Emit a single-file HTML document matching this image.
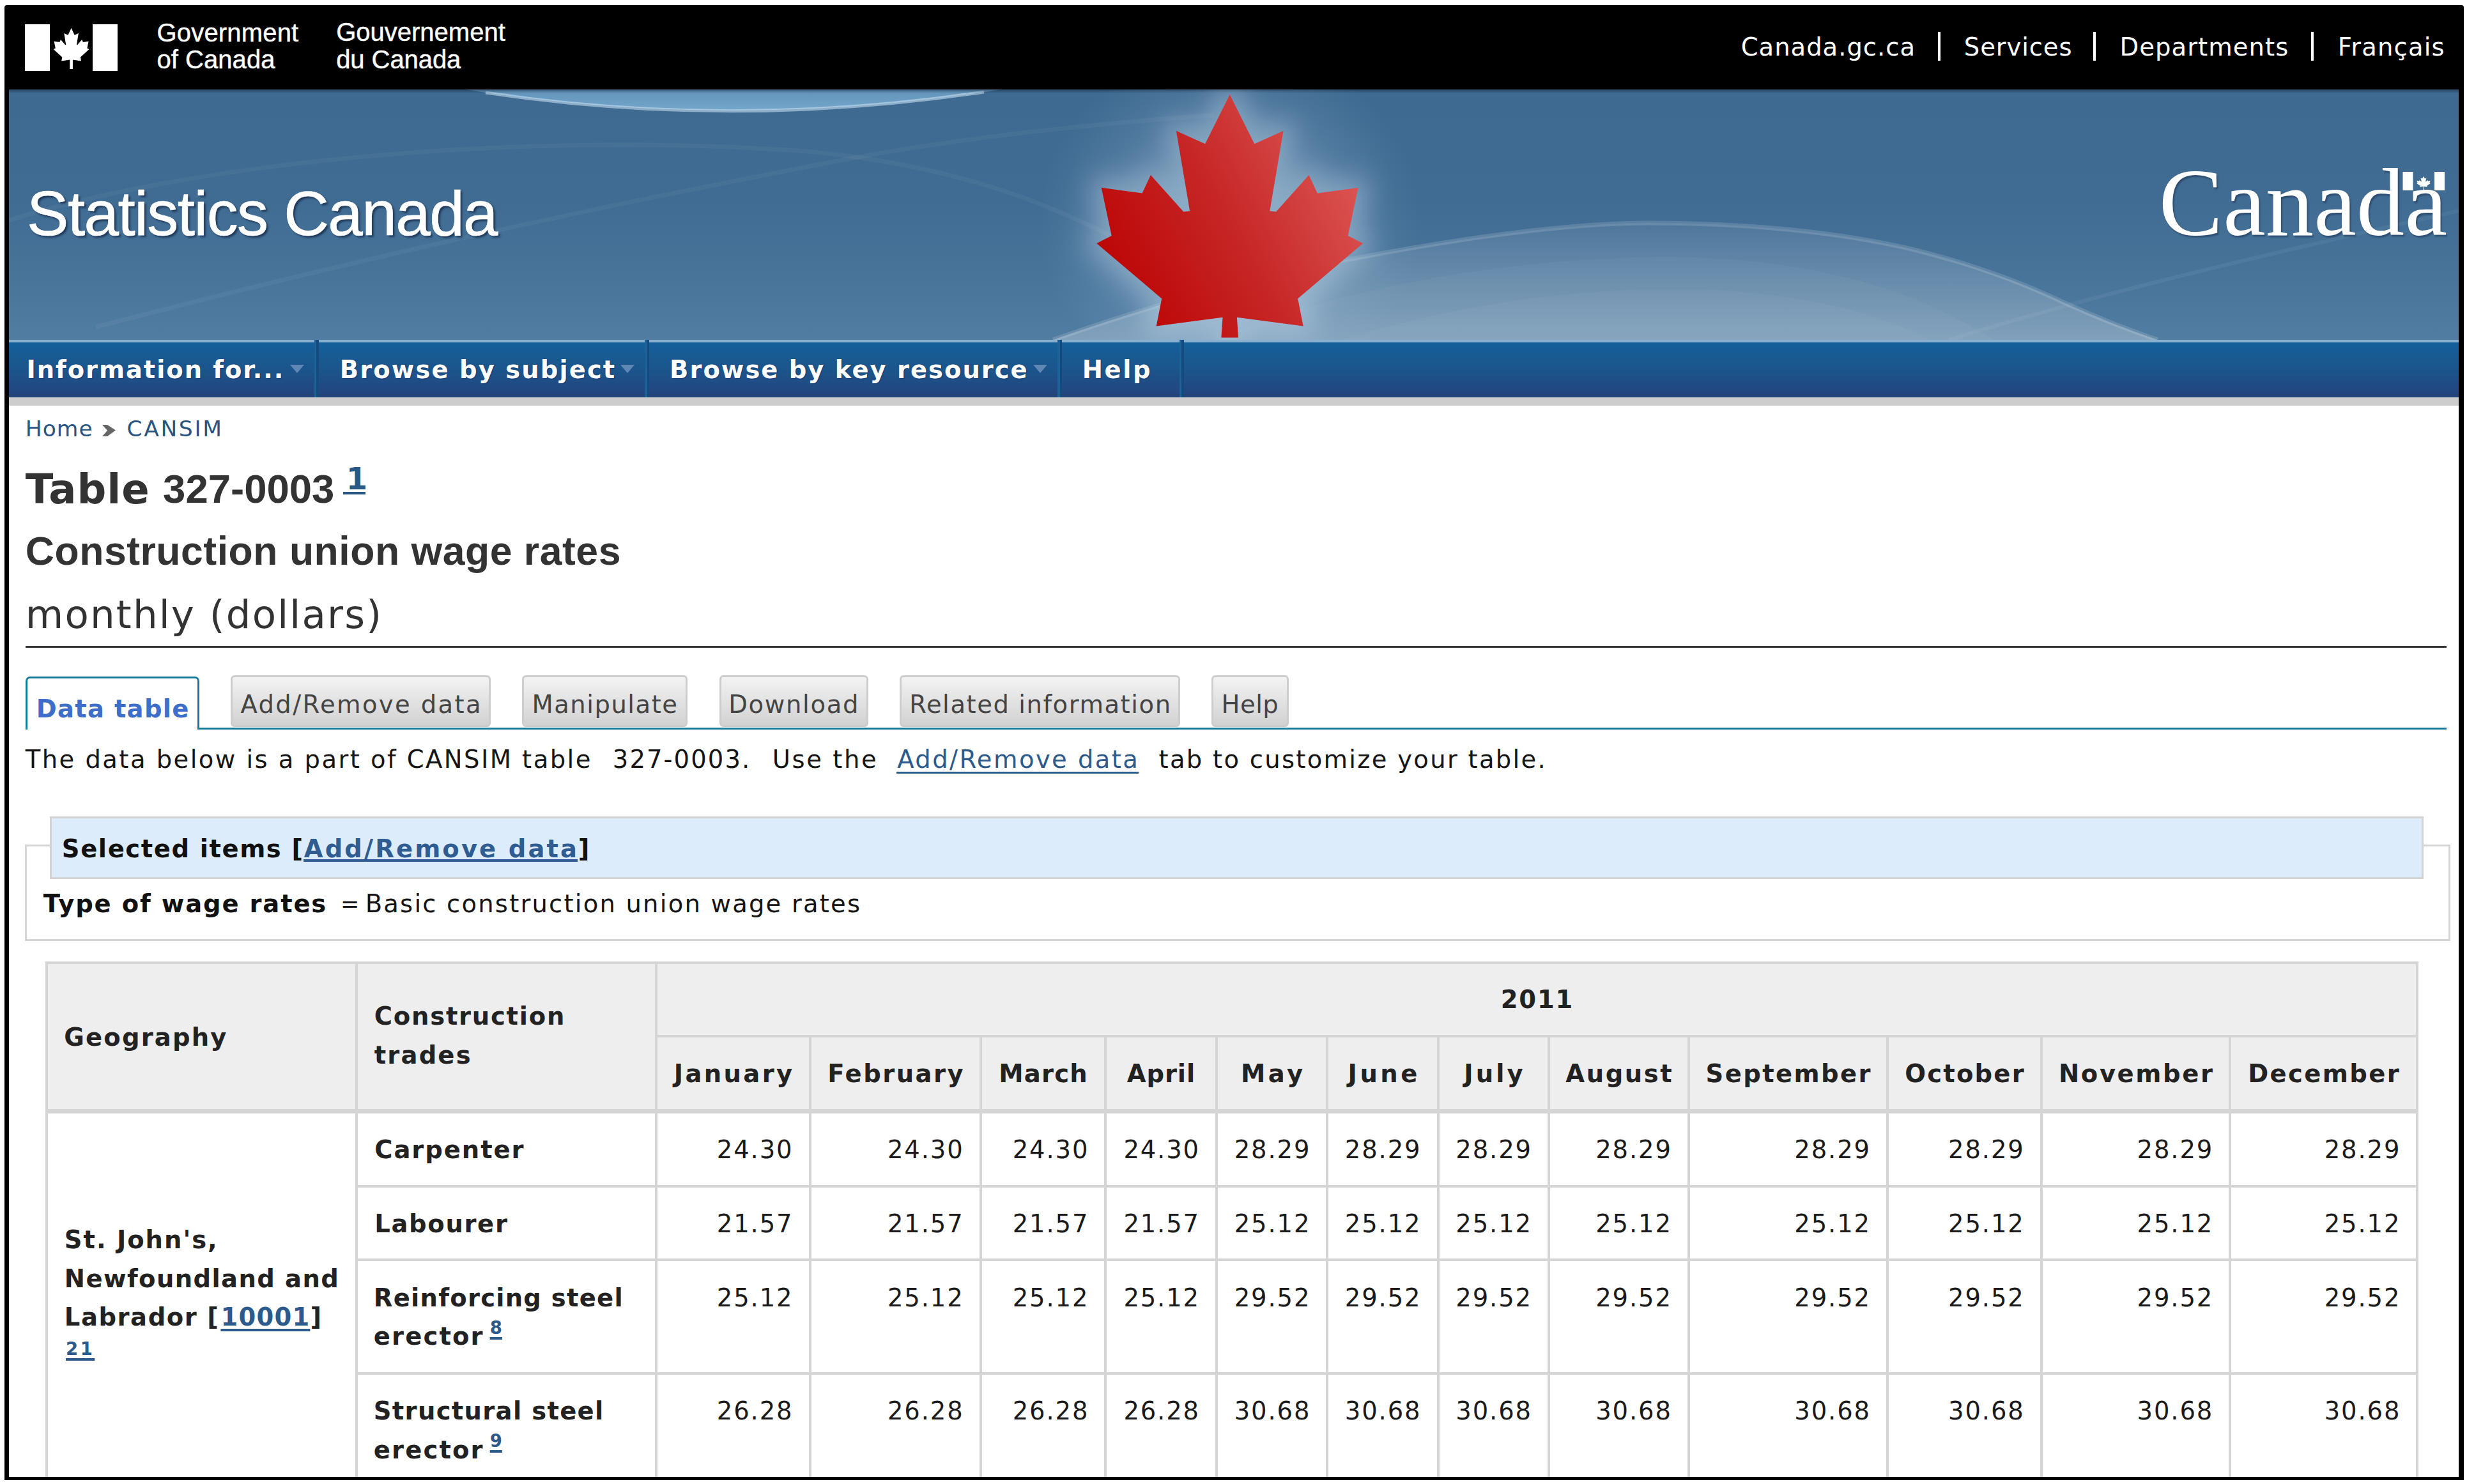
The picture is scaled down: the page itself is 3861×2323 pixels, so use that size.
<!DOCTYPE html>
<html lang="en"><head><meta charset="utf-8"><title>CANSIM - 327-0003 - Construction union wage rates</title>
<style>
html,body{margin:0;padding:0;background:#fff;}
body{width:3861px;height:2323px;position:relative;font-family:"DejaVu Sans","Liberation Sans",sans-serif;}
#wrap{position:absolute;left:0;top:0;width:3861px;height:2323px;overflow:hidden;}
#wrap div,#wrap span,#wrap a,#wrap svg,#wrap h1,#wrap p,#wrap nav,#wrap header,#wrap section,#wrap table,#wrap sup{position:absolute;margin:0;padding:0;white-space:nowrap;box-sizing:border-box;}
a{text-decoration:none;color:inherit;}

#wrap .g{position:static;display:contents;}
#frame{left:7px;top:8px;width:3849px;height:2309px;background:#000;border-radius:4px 4px 0 0;}
#page{left:14px;top:140px;width:3834px;height:2172px;background:#fff;}
.sep{background:#fff;width:4px;}
.navdiv{top:532px;width:7px;height:90px;background:linear-gradient(90deg,#1a6298 0,#1a6298 50%,#164a7e 50%,#164a7e 100%);}
.arr{width:0;height:0;border-left:11px solid transparent;border-right:11px solid transparent;border-top:13px solid #5f87b5;top:571px;}

.lnk{text-decoration:underline;text-decoration-thickness:3px;text-underline-offset:5px;}
.btn{top:1057px;height:81px;border:3px solid #cdcdcd;border-radius:6px;background:linear-gradient(#f3f3f3,#e4e4e4 45%,#d2d2d2);}

#wrap table#dt{left:71px;top:1505px;width:3714px;border-collapse:separate;border-spacing:0;table-layout:fixed;font-size:38.5px;line-height:60px;color:#222;}
#wrap table#dt *{position:static;}
#dt th,#dt td{border-left:4px solid #d5d5d5;border-top:4px solid #d5d5d5;padding:0;vertical-align:top;text-align:left;font-weight:bold;overflow:hidden;box-sizing:border-box;}
#dt td{font-weight:normal;text-align:right;color:#1a1a1a;}
#dt .last{border-right:4px solid #d5d5d5;}
#dt thead th{background:#eee;}
#dt thead th.c{text-align:center;}
#dt tbody tr.first>*{border-top-width:7px;}
#wrap #dt span.b{display:block;}
#wrap #dt a{color:#2b5b8c;text-decoration:underline;text-decoration-thickness:3.5px;text-underline-offset:5px;}
#wrap #dt sup{font-size:27.5px;line-height:0;vertical-align:17.5px;}

</style></head><body><div id="wrap">
<div id="frame"></div>
<div id="page"></div>
<header class="g" id="gcnb">
<svg style="left:14px;top:8px" width="3834" height="132" viewBox="14 8 3834 132">
<rect x="39" y="38" width="39" height="73" fill="#fff"/><rect x="145" y="38" width="39" height="73" fill="#fff"/>
<polygon fill="#fff" points="111.6,44.0 116.8,55.0 122.9,52.1 120.0,69.9 121.3,70.1 128.2,61.9 130.0,65.9 138.6,64.7 136.4,75.4 139.6,77.1 125.9,89.4 127.0,95.5 113.9,93.6 113.9,108.0 109.3,108.0 109.3,93.6 96.2,95.5 97.3,89.4 83.6,77.1 86.8,75.4 84.6,64.7 93.2,65.9 95.0,61.9 101.9,70.1 103.2,69.9 100.3,52.1 106.4,55.0"/>
</svg>
<span style="left:245.5px;top:30.5px;font:40px/40px 'Liberation Sans',sans-serif;color:#fff;letter-spacing:0.18px;-webkit-text-stroke:.45px #fff;">Government</span>
<span style="left:245.5px;top:73.3px;font:40px/40px 'Liberation Sans',sans-serif;color:#fff;letter-spacing:0.04px;-webkit-text-stroke:.45px #fff;">of Canada</span>
<span style="left:526.2px;top:29.8px;font:40px/40px 'Liberation Sans',sans-serif;color:#fff;letter-spacing:0.00px;-webkit-text-stroke:.45px #fff;">Gouvernement</span>
<span style="left:526.2px;top:72.6px;font:40px/40px 'Liberation Sans',sans-serif;color:#fff;letter-spacing:-0.07px;-webkit-text-stroke:.45px #fff;">du Canada</span>
<a style="left:2724.7px;top:55.3px;font:38.5px/38.5px 'DejaVu Sans','Liberation Sans',sans-serif;color:#fff;letter-spacing:1.00px;">Canada.gc.ca</a>
<a style="left:3073.8px;top:55.3px;font:38.5px/38.5px 'DejaVu Sans','Liberation Sans',sans-serif;color:#fff;letter-spacing:0.91px;">Services</a>
<a style="left:3317.6px;top:55.3px;font:38.5px/38.5px 'DejaVu Sans','Liberation Sans',sans-serif;color:#fff;letter-spacing:1.06px;">Departments</a>
<a style="left:3658.8px;top:55.3px;font:38.5px/38.5px 'DejaVu Sans','Liberation Sans',sans-serif;color:#fff;letter-spacing:1.16px;">Français</a>
<div class="sep" style="left:3033px;top:50px;height:45px"></div>
<div class="sep" style="left:3276px;top:50px;height:45px"></div>
<div class="sep" style="left:3617px;top:50px;height:45px"></div>
<svg id="banner" style="left:14px;top:140px" width="3834" height="392" viewBox="14 140 3834 392">
<defs>
<linearGradient id="bg" x1="0" y1="0" x2="0" y2="1"><stop offset="0" stop-color="#3e6990"/><stop offset=".45" stop-color="#406b92"/><stop offset=".75" stop-color="#48749a"/><stop offset="1" stop-color="#527da2"/></linearGradient>
<linearGradient id="lg" x1="0" y1=".75" x2="1" y2=".25"><stop offset="0.08" stop-color="#bd0808"/><stop offset="0.5" stop-color="#c72727"/><stop offset="0.95" stop-color="#db5654"/></linearGradient>
<radialGradient id="glow"><stop offset="0" stop-color="#b9d3e7" stop-opacity=".4"/><stop offset=".6" stop-color="#a3c3dc" stop-opacity=".22"/><stop offset="1" stop-color="#8fb4d2" stop-opacity="0"/></radialGradient>
<filter id="blur" x="-30%" y="-30%" width="160%" height="160%"><feGaussianBlur stdDeviation="20"/></filter>
<linearGradient id="cres" x1="0" y1="0" x2="0" y2="1"><stop offset="0" stop-color="#86bbe0" stop-opacity=".5"/><stop offset="1" stop-color="#8cc0e4" stop-opacity=".7"/></linearGradient>
<linearGradient id="topsh" x1="0" y1="0" x2="0" y2="1"><stop offset="0" stop-color="#0a1a30" stop-opacity=".45"/><stop offset="1" stop-color="#0a1a30" stop-opacity="0"/></linearGradient>
<linearGradient id="dome" gradientUnits="userSpaceOnUse" x1="0" y1="349" x2="0" y2="532"><stop offset="0" stop-color="#fff" stop-opacity=".07"/><stop offset="1" stop-color="#fff" stop-opacity=".27"/></linearGradient>
</defs>
<rect x="14" y="140" width="3834" height="392" fill="url(#bg)"/>
<path d="M728,140 Q1145,206 1568,140 Z" fill="url(#cres)"/>
<path d="M760,145 Q1145,203 1540,144" fill="none" stroke="#cfe6f5" stroke-opacity=".55" stroke-width="5"/>
<rect x="14" y="140" width="3834" height="6" fill="url(#topsh)"/>
<path d="M14,345 C300,255 800,205 1250,236 C1550,260 1750,360 1900,470" fill="none" stroke="#fff" stroke-opacity=".045" stroke-width="7"/>
<path d="M150,512 C500,420 900,330 1300,254 C1500,215 1700,195 1900,180" fill="none" stroke="#fff" stroke-opacity=".045" stroke-width="7"/>

<path d="M1648,532 C1800,478 1990,425 2122,404 C2290,372 2450,350 2578,349 C2750,349 2890,366 2992,390 C3090,414 3170,445 3229,473 C3295,503 3345,521 3377,532 Z" fill="url(#dome)"/>
<path d="M1648,532 C1800,478 1990,425 2122,404 C2290,372 2450,350 2578,349 C2750,349 2890,366 2992,390 C3090,414 3170,445 3229,473 C3295,503 3345,521 3377,532" fill="none" stroke="#fff" stroke-opacity=".14" stroke-width="7"/>
<path d="M1900,532 C2100,450 2350,405 2600,402 C2800,402 2980,440 3120,532 Z" fill="#fff" fill-opacity=".035"/>
<path d="M2100,532 C2300,470 2500,445 2700,455 C2850,465 2950,495 3020,532 Z" fill="#fff" fill-opacity=".03"/>
<path d="M3050,532 C3250,470 3450,420 3848,330" fill="none" stroke="#fff" stroke-opacity=".05" stroke-width="6"/>
<ellipse cx="1925" cy="350" rx="300" ry="280" fill="url(#glow)"/>
<g filter="url(#blur)" opacity=".36"><polygon points="1924.7,148.0 1963.3,225.2 2008.6,204.7 1987.3,330.3 1997.1,331.6 2048.5,273.9 2061.8,302.4 2125.7,293.8 2109.7,368.9 2133.1,380.9 2031.2,467.4 2039.7,510.5 1935.9,496.7 1938.0,528.6 1911.4,528.6 1913.5,496.7 1809.7,510.5 1818.2,467.4 1716.3,380.9 1739.7,368.9 1723.7,293.8 1787.6,302.4 1800.9,273.9 1852.3,331.6 1862.1,330.3 1840.8,204.7 1886.1,225.2" fill="#cfe3f2" stroke="#cfe3f2" stroke-width="34" stroke-linejoin="round"/></g>
<polygon points="1924.7,148.0 1963.3,225.2 2008.6,204.7 1987.3,330.3 1997.1,331.6 2048.5,273.9 2061.8,302.4 2125.7,293.8 2109.7,368.9 2133.1,380.9 2031.2,467.4 2039.7,510.5 1935.9,496.7 1938.0,528.6 1911.4,528.6 1913.5,496.7 1809.7,510.5 1818.2,467.4 1716.3,380.9 1739.7,368.9 1723.7,293.8 1787.6,302.4 1800.9,273.9 1852.3,331.6 1862.1,330.3 1840.8,204.7 1886.1,225.2" fill="url(#lg)"/>
<g fill="#fff"><rect x="3760.5" y="269" width="16" height="29"/><rect x="3810" y="269" width="16" height="29"/>
<path transform="translate(3764.613 273.916) scale(0.00591 0.00521)" d="m4890 4430-45-863a95 95 0 0 1 111-98l859 151-116-320a65 65 0 0 1 20-73l941-762-212-99a65 65 0 0 1-34-79l186-572-542 115a65 65 0 0 1-73-38l-105-247-423 454a65 65 0 0 1-111-57l204-1052-327 189a65 65 0 0 1-91-27l-332-652-332 652a65 65 0 0 1-91 27l-327-189 204 1052a65 65 0 0 1-111 57l-423-454-105 247a65 65 0 0 1-73 38l-542-115 186 572a65 65 0 0 1-34 79l-212 99 941 762a65 65 0 0 1 20 73l-116 320 859-151a95 95 0 0 1 111 98l-45 863z"/></g>
</svg>
<div style="left:42.1px;top:285.0px;font:98px/98px 'Liberation Sans',sans-serif;color:#fff;letter-spacing:-1.57px;text-shadow:3px 3px 3px rgba(20,40,70,.75);-webkit-text-stroke:.7px #fff;">Statistics Canada</div>
<div style="left:3378.8px;top:242.4px;font:150px/150px 'Liberation Serif',serif;color:#fff;letter-spacing:0.28px;text-shadow:2px 3px 2px rgba(30,50,80,.5);">Canada</div>
</header>
<nav class="g">
<div style="left:14px;top:532px;width:3834px;height:90px;background:linear-gradient(#8ab0cf 0,#8ab0cf 3.5px,#14609a 3.5px,#1b558c 50%,#24437d 100%);"></div>
<div class="navdiv" style="left:492.2px"></div>
<div class="navdiv" style="left:1008.7px"></div>
<div class="navdiv" style="left:1654.7px"></div>
<div class="navdiv" style="left:1845.7px"></div>
<a style="left:41.4px;top:560.4px;font:bold 38.5px/38.5px 'DejaVu Sans','Liberation Sans',sans-serif;color:#fff;letter-spacing:1.92px;text-shadow:1px 1px 1px rgba(0,0,60,.35);">Information for...</a>
<a style="left:531.8px;top:560.4px;font:bold 38.5px/38.5px 'DejaVu Sans','Liberation Sans',sans-serif;color:#fff;letter-spacing:2.07px;text-shadow:1px 1px 1px rgba(0,0,60,.35);">Browse by subject</a>
<a style="left:1048.1px;top:560.4px;font:bold 38.5px/38.5px 'DejaVu Sans','Liberation Sans',sans-serif;color:#fff;letter-spacing:1.99px;text-shadow:1px 1px 1px rgba(0,0,60,.35);">Browse by key resource</a>
<a style="left:1693.8px;top:560.4px;font:bold 38.5px/38.5px 'DejaVu Sans','Liberation Sans',sans-serif;color:#fff;letter-spacing:2.53px;text-shadow:1px 1px 1px rgba(0,0,60,.35);">Help</a>
<div class="arr" style="left:454px"></div>
<div class="arr" style="left:971px"></div>
<div class="arr" style="left:1616.5px"></div>
</nav>
<div style="left:14px;top:622px;width:3834px;height:13px;background:#cdcdcd"></div>
<div class="g" id="bc">
<a style="left:39.8px;top:654.3px;font:34.5px/34.5px 'DejaVu Sans','Liberation Sans',sans-serif;color:#2a5580;letter-spacing:1.00px;">Home</a>
<svg style="left:159px;top:664px" width="24" height="20" viewBox="0 0 24 20"><path d="M1,1 L9,1 L22,9.5 L9,19 L1,19 L9,10 Z" fill="#666"/></svg>
<a style="left:198.4px;top:654.3px;font:34.5px/34.5px 'DejaVu Sans','Liberation Sans',sans-serif;color:#2a5580;letter-spacing:2.66px;">CANSIM</a>
</div>
<h1 class="g">
<span style="left:39.8px;top:734.2px;font:bold 64px/64px 'DejaVu Sans','Liberation Sans',sans-serif;color:#333;letter-spacing:1.05px;">Table</span>
<span style="left:255.1px;top:734.4px;font:bold 63.5px/63.5px 'Liberation Sans',sans-serif;color:#333;letter-spacing:-0.01px;">327-0003</span>
<a style="left:541.8px;top:724.5px;font:bold 48px/48px 'DejaVu Sans','Liberation Sans',sans-serif;color:#2a5885;letter-spacing:0.00px;">1</a>
<div style="left:537px;top:770px;width:35px;height:4px;background:#2a5885"></div>
<span style="left:39.8px;top:831.0px;font:bold 62.5px/62.5px 'Liberation Sans',sans-serif;color:#333;letter-spacing:0.53px;">Construction union wage rates</span>
<span style="left:39.8px;top:930.8px;font:61px/61px 'DejaVu Sans','Liberation Sans',sans-serif;color:#333;letter-spacing:2.19px;">monthly (dollars)</span>
</h1>
<div style="left:39.5px;top:1010.5px;width:3789.5px;height:3.5px;background:#333"></div>
<div class="g" id="tabs">
<div style="left:312px;top:1138.5px;width:3517px;height:3.5px;background:#147a9c"></div>
<div style="left:39.6px;top:1059px;width:272.4px;height:83px;border:3.5px solid #147a9c;border-bottom:0;border-radius:7px 7px 0 0;background:#fff"></div>
<a style="left:56.7px;top:1090.6px;font:bold 38.5px/38.5px 'DejaVu Sans','Liberation Sans',sans-serif;color:#3d6ec9;letter-spacing:1.30px;">Data table</a>
<div class="btn" style="left:360.5px;width:407.8px"></div>
<a style="left:376.4px;top:1084.0px;font:38.5px/38.5px 'DejaVu Sans','Liberation Sans',sans-serif;color:#444;letter-spacing:2.40px;">Add/Remove data</a>
<div class="btn" style="left:817.3px;width:258.3px"></div>
<a style="left:832.5px;top:1084.0px;font:38.5px/38.5px 'DejaVu Sans','Liberation Sans',sans-serif;color:#444;letter-spacing:1.52px;">Manipulate</a>
<div class="btn" style="left:1125.8px;width:233.2px"></div>
<a style="left:1140.2px;top:1084.0px;font:38.5px/38.5px 'DejaVu Sans','Liberation Sans',sans-serif;color:#444;letter-spacing:1.71px;">Download</a>
<div class="btn" style="left:1408.0px;width:439.3px"></div>
<a style="left:1423.3px;top:1084.0px;font:38.5px/38.5px 'DejaVu Sans','Liberation Sans',sans-serif;color:#444;letter-spacing:1.56px;">Related information</a>
<div class="btn" style="left:1896.3px;width:120.4px"></div>
<a style="left:1911.6px;top:1084.0px;font:38.5px/38.5px 'DejaVu Sans','Liberation Sans',sans-serif;color:#444;letter-spacing:0.47px;">Help</a>
</div>
<p class="g">
<span style="left:39.8px;top:1170.0px;font:38.5px/38.5px 'DejaVu Sans','Liberation Sans',sans-serif;color:#151515;letter-spacing:2.45px;">The data below is a part of CANSIM table</span>
<span style="left:958.8px;top:1170.0px;font:38.5px/38.5px 'DejaVu Sans','Liberation Sans',sans-serif;color:#151515;letter-spacing:2.11px;">327-0003.</span>
<span style="left:1208.8px;top:1170.0px;font:38.5px/38.5px 'DejaVu Sans','Liberation Sans',sans-serif;color:#151515;letter-spacing:2.57px;">Use the</span>
<a style="left:1404.2px;top:1170.0px;font:38.5px/38.5px 'DejaVu Sans','Liberation Sans',sans-serif;color:#2b5b8c;letter-spacing:2.43px;">Add/Remove data</a>
<div style="left:1403px;top:1207.5px;width:379px;height:3.5px;background:#2b5b8c"></div>
<span style="left:1813.5px;top:1170.0px;font:38.5px/38.5px 'DejaVu Sans','Liberation Sans',sans-serif;color:#151515;letter-spacing:2.29px;">tab to customize your table.</span>
</p>
<section class="g" id="selected">
<div class="fieldset" style="left:39.2px;top:1322px;width:3796px;height:150.5px;border:3.5px solid #d6d6d6;"></div>
<div class="legend" style="left:78px;top:1277.6px;width:3715px;height:98.6px;background:#ddecfb;border:3.5px solid #d3d3d3;"></div>
<span style="left:96.8px;top:1309.5px;font:bold 38.5px/38.5px 'DejaVu Sans','Liberation Sans',sans-serif;color:#111;letter-spacing:1.60px;">Selected items [</span>
<a style="left:475.8px;top:1309.5px;font:bold 38.5px/38.5px 'DejaVu Sans','Liberation Sans',sans-serif;color:#2f5d91;letter-spacing:3.10px;">Add/Remove data</a>
<div style="left:475px;top:1345px;width:429px;height:3.5px;background:#2f5d91"></div>
<span style="left:904.8px;top:1309.5px;font:bold 38.5px/38.5px 'DejaVu Sans','Liberation Sans',sans-serif;color:#111;letter-spacing:0.00px;">]</span>
<span style="left:67.8px;top:1395.5px;font:bold 38.5px/38.5px 'DejaVu Sans','Liberation Sans',sans-serif;color:#111;letter-spacing:1.82px;">Type of wage rates</span>
<span style="left:533.0px;top:1397.8px;font:35px/35px 'DejaVu Sans','Liberation Sans',sans-serif;color:#151515;letter-spacing:0.00px;">=</span>
<span style="left:571.7px;top:1395.5px;font:38.5px/38.5px 'DejaVu Sans','Liberation Sans',sans-serif;color:#151515;letter-spacing:2.21px;">Basic construction union wage rates</span>
</section>
<table id="dt"><colgroup><col style="width:485px"><col style="width:469px"><col style="width:241px"><col style="width:267px"><col style="width:195px"><col style="width:174px"><col style="width:173px"><col style="width:174px"><col style="width:173px"><col style="width:219px"><col style="width:311px"><col style="width:241px"><col style="width:295px"><col style="width:297px"></colgroup>
<thead><tr style="height:115px">
<th rowspan="2" scope="col" style="padding-top:84.7px"><span class="b" style="margin-left:25.2px;letter-spacing:2.19px">Geography</span></th>
<th rowspan="2" scope="col" style="padding-top:51.2px;line-height:61px"><span class="b" style="margin-left:25.8px;letter-spacing:1.77px">Construction</span><span class="b" style="margin-left:25.8px;letter-spacing:2.16px">trades</span></th>
<th colspan="12" scope="colgroup" class="c last" style="padding-top:25.7px"><span style="letter-spacing:1.80px;margin-right:-1.80px">2011</span></th></tr>
<tr style="height:116px">
<th scope="col" class="c" style="padding-top:27.2px"><span style="letter-spacing:3.35px;margin-right:-3.35px">January</span></th>
<th scope="col" class="c" style="padding-top:27.2px"><span style="letter-spacing:2.49px;margin-right:-2.49px">February</span></th>
<th scope="col" class="c" style="padding-top:27.2px"><span style="letter-spacing:1.25px;margin-right:-1.25px">March</span></th>
<th scope="col" class="c" style="padding-top:27.2px"><span style="letter-spacing:0.90px;margin-right:-0.90px">April</span></th>
<th scope="col" class="c" style="padding-top:27.2px"><span style="letter-spacing:4.40px;margin-right:-4.40px">May</span></th>
<th scope="col" class="c" style="padding-top:27.2px"><span style="letter-spacing:4.50px;margin-right:-4.50px">June</span></th>
<th scope="col" class="c" style="padding-top:27.2px"><span style="letter-spacing:4.10px;margin-right:-4.10px">July</span></th>
<th scope="col" class="c" style="padding-top:27.2px"><span style="letter-spacing:2.60px;margin-right:-2.60px">August</span></th>
<th scope="col" class="c" style="padding-top:27.2px"><span style="letter-spacing:2.41px;margin-right:-2.41px">September</span></th>
<th scope="col" class="c" style="padding-top:27.2px"><span style="letter-spacing:2.20px;margin-right:-2.20px">October</span></th>
<th scope="col" class="c" style="padding-top:27.2px"><span style="letter-spacing:2.63px;margin-right:-2.63px">November</span></th>
<th scope="col" class="c last" style="padding-top:27.2px"><span style="letter-spacing:2.41px;margin-right:-2.41px">December</span></th>
</tr></thead><tbody>
<tr class="first" style="height:119px">
<th rowspan="4" scope="rowgroup" style="padding-top:168.2px;line-height:60.6px"><span class="b" style="margin-left:25.8px;letter-spacing:1.98px">St. John&#x27;s,</span><span class="b" style="margin-left:25.8px;letter-spacing:1.40px">Newfoundland and</span><span class="" style="margin-left:25.8px;letter-spacing:1.56px">Labrador [</span><a style="letter-spacing:1.2px;margin-left:2px">10001</a><span style="margin-left:0px">]</span><span class="b" style="margin-left:28px;font-size:27.5px;line-height:36px;letter-spacing:3.5px"><a>21</a></span></th>
<th scope="row" style="padding-top:26.7px;line-height:60.6px"><span class="b" style="margin-left:26.2px;letter-spacing:1.95px">Carpenter</span></th>
<td style="padding-top:26.7px;padding-right:24.6px;letter-spacing:1.88px">24.30</td>
<td style="padding-top:26.7px;padding-right:24.4px;letter-spacing:1.88px">24.30</td>
<td style="padding-top:26.7px;padding-right:23.7px;letter-spacing:1.88px">24.30</td>
<td style="padding-top:26.7px;padding-right:24.0px;letter-spacing:1.88px">24.30</td>
<td style="padding-top:26.7px;padding-right:23.7px;letter-spacing:1.88px">28.29</td>
<td style="padding-top:26.7px;padding-right:24.6px;letter-spacing:1.88px">28.29</td>
<td style="padding-top:26.7px;padding-right:24.1px;letter-spacing:1.88px">28.29</td>
<td style="padding-top:26.7px;padding-right:24.2px;letter-spacing:1.88px">28.29</td>
<td style="padding-top:26.7px;padding-right:24.1px;letter-spacing:1.88px">28.29</td>
<td style="padding-top:26.7px;padding-right:24.3px;letter-spacing:1.88px">28.29</td>
<td style="padding-top:26.7px;padding-right:23.8px;letter-spacing:1.88px">28.29</td>
<td class=last style="padding-top:26.7px;padding-right:23.7px;letter-spacing:1.88px">28.29</td>
</tr>
<tr class="" style="height:115px">
<th scope="row" style="padding-top:27.0px;line-height:60.6px"><span class="b" style="margin-left:26.2px;letter-spacing:1.67px">Labourer</span></th>
<td style="padding-top:27.0px;padding-right:24.6px;letter-spacing:1.88px">21.57</td>
<td style="padding-top:27.0px;padding-right:24.4px;letter-spacing:1.88px">21.57</td>
<td style="padding-top:27.0px;padding-right:23.7px;letter-spacing:1.88px">21.57</td>
<td style="padding-top:27.0px;padding-right:24.0px;letter-spacing:1.88px">21.57</td>
<td style="padding-top:27.0px;padding-right:23.7px;letter-spacing:1.88px">25.12</td>
<td style="padding-top:27.0px;padding-right:24.6px;letter-spacing:1.88px">25.12</td>
<td style="padding-top:27.0px;padding-right:24.1px;letter-spacing:1.88px">25.12</td>
<td style="padding-top:27.0px;padding-right:24.2px;letter-spacing:1.88px">25.12</td>
<td style="padding-top:27.0px;padding-right:24.1px;letter-spacing:1.88px">25.12</td>
<td style="padding-top:27.0px;padding-right:24.3px;letter-spacing:1.88px">25.12</td>
<td style="padding-top:27.0px;padding-right:23.8px;letter-spacing:1.88px">25.12</td>
<td class=last style="padding-top:27.0px;padding-right:23.7px;letter-spacing:1.88px">25.12</td>
</tr>
<tr class="" style="height:178px">
<th scope="row" style="padding-top:27.7px;line-height:60.6px"><span class="b" style="margin-left:24.8px;letter-spacing:1.26px">Reinforcing steel</span><span class="" style="margin-left:24.8px;letter-spacing:2.15px">erector</span><sup style="margin-left:9px"><a>8</a></sup></th>
<td style="padding-top:27.7px;padding-right:24.6px;letter-spacing:1.88px">25.12</td>
<td style="padding-top:27.7px;padding-right:24.4px;letter-spacing:1.88px">25.12</td>
<td style="padding-top:27.7px;padding-right:23.7px;letter-spacing:1.88px">25.12</td>
<td style="padding-top:27.7px;padding-right:24.0px;letter-spacing:1.88px">25.12</td>
<td style="padding-top:27.7px;padding-right:23.7px;letter-spacing:1.88px">29.52</td>
<td style="padding-top:27.7px;padding-right:24.6px;letter-spacing:1.88px">29.52</td>
<td style="padding-top:27.7px;padding-right:24.1px;letter-spacing:1.88px">29.52</td>
<td style="padding-top:27.7px;padding-right:24.2px;letter-spacing:1.88px">29.52</td>
<td style="padding-top:27.7px;padding-right:24.1px;letter-spacing:1.88px">29.52</td>
<td style="padding-top:27.7px;padding-right:24.3px;letter-spacing:1.88px">29.52</td>
<td style="padding-top:27.7px;padding-right:23.8px;letter-spacing:1.88px">29.52</td>
<td class=last style="padding-top:27.7px;padding-right:23.7px;letter-spacing:1.88px">29.52</td>
</tr>
<tr class="" style="height:182px">
<th scope="row" style="padding-top:27.2px;line-height:60.6px"><span class="b" style="margin-left:24.8px;letter-spacing:1.33px">Structural steel</span><span class="" style="margin-left:24.8px;letter-spacing:2.15px">erector</span><sup style="margin-left:9px"><a>9</a></sup></th>
<td style="padding-top:27.2px;padding-right:24.6px;letter-spacing:1.88px">26.28</td>
<td style="padding-top:27.2px;padding-right:24.4px;letter-spacing:1.88px">26.28</td>
<td style="padding-top:27.2px;padding-right:23.7px;letter-spacing:1.88px">26.28</td>
<td style="padding-top:27.2px;padding-right:24.0px;letter-spacing:1.88px">26.28</td>
<td style="padding-top:27.2px;padding-right:23.7px;letter-spacing:1.88px">30.68</td>
<td style="padding-top:27.2px;padding-right:24.6px;letter-spacing:1.88px">30.68</td>
<td style="padding-top:27.2px;padding-right:24.1px;letter-spacing:1.88px">30.68</td>
<td style="padding-top:27.2px;padding-right:24.2px;letter-spacing:1.88px">30.68</td>
<td style="padding-top:27.2px;padding-right:24.1px;letter-spacing:1.88px">30.68</td>
<td style="padding-top:27.2px;padding-right:24.3px;letter-spacing:1.88px">30.68</td>
<td style="padding-top:27.2px;padding-right:23.8px;letter-spacing:1.88px">30.68</td>
<td class=last style="padding-top:27.2px;padding-right:23.7px;letter-spacing:1.88px">30.68</td>
</tr>
</tbody></table>
<div style="left:7px;top:2312px;width:3849px;height:5px;background:#000"></div>
<div style="left:0;top:2317px;width:3861px;height:6px;background:#fff"></div>
</div></body></html>
